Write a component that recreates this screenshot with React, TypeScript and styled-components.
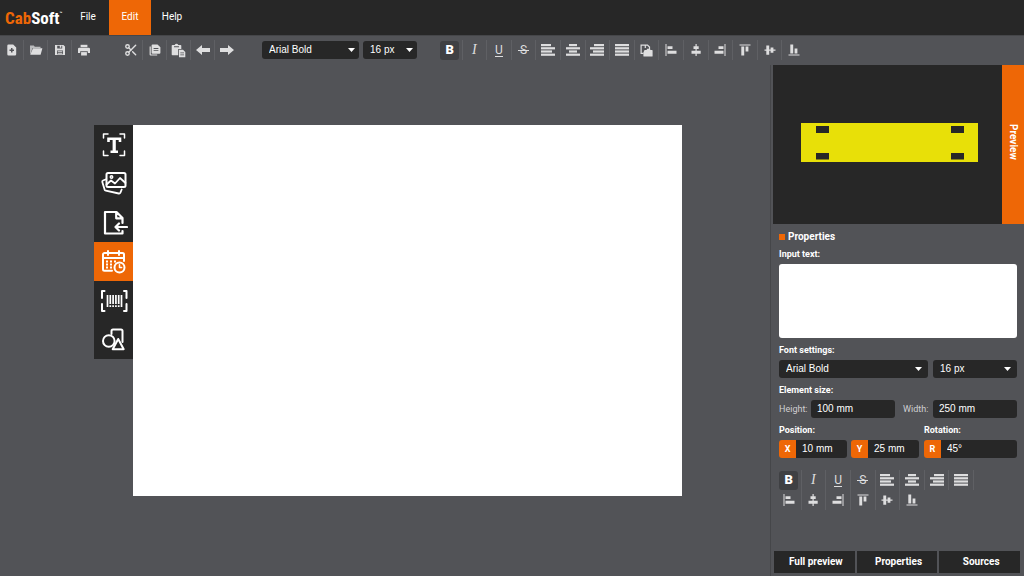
import React from "react";
import styled, { createGlobalStyle, css } from "styled-components";
import { Scissors } from "lucide-react";

const color = {
  bg: "#525357",
  dark: "#272727",
  line: "#5f6064",
  edge: "#454649",
  orange: "#ee6706",
  yellow: "#e8e008",
  icon: "#dededf",
  soft: "#d0d0d2",
};

const roboto = `Roboto, "Liberation Sans", sans-serif`;
const arial = `"Liberation Sans", Arial, sans-serif`;

const GlobalStyle = createGlobalStyle`
  *, *::before, *::after { box-sizing: border-box; }
  body { margin: 0; background: ${color.bg}; color: #fff; font-family: ${roboto}; font-size: 10px; }
  button, input, select, textarea { font: inherit; color: inherit; margin: 0; padding: 0; border: 0; background: none; border-radius: 0; }
  button { cursor: pointer; }
`;

const Page = styled.div`
  display: flex;
  flex-direction: column;
  min-height: 100vh;
`;

/* ---------- header ---------- */

const Header = styled.header`
  display: flex;
  height: 35px;
  background: ${color.dark};
`;

const Logo = styled.a`
  display: flex;
  align-items: center;
  width: 67px;
  padding-left: 5px;
  font-family: "Liberation Sans Narrow", "Roboto Condensed", Roboto, sans-serif;
  font-weight: 700;
  font-size: 17px;
  line-height: 20px;
  color: #fff;
  text-decoration: none;
`;

const LogoAccent = styled.span`
  color: ${color.orange};
`;

const LogoMark = styled.span`
  align-self: flex-start;
  padding-top: 9px;
  font-size: 5px;
  line-height: 8px;
`;

const Menu = styled.nav`
  display: flex;
`;

const MenuItem = styled.button<{ $active?: boolean }>`
  width: 42px;
  padding-bottom: 2px;
  background: ${(p) => (p.$active ? color.orange : "none")};
`;

/* ---------- tool bars ---------- */

const Toolbar = styled.div`
  display: flex;
  align-items: center;
  height: 30px;
  box-shadow: inset 0 1px ${color.edge};
`;

const IconGroup = styled.div<{ $columns: number; $width: number; $gap?: number }>`
  display: grid;
  grid-template-columns: repeat(${(p) => p.$columns}, 1fr);
  flex: none;
  width: ${(p) => p.$width}px;
  margin-right: ${(p) => p.$gap ?? 0}px;
`;

const IconCell = styled.div`
  display: flex;
  justify-content: center;
  align-items: center;
  height: 20px;
  border-right: 1px solid ${color.line};
  &:last-child {
    border-right-color: transparent;
  }
`;

const IconButton = styled.button<{ $on?: boolean }>`
  display: flex;
  justify-content: center;
  align-items: center;
  width: 19px;
  height: 19px;
  border-radius: 3px;
  color: ${color.icon};
  background: ${(p) => (p.$on ? "#3f4043" : "none")};
  svg {
    display: block;
    flex: none;
  }
`;

const Letter = styled.span<{ $kind: "b" | "i" | "u" | "s" }>`
  font-size: 12px;
  line-height: 14px;
  ${(p) => p.$kind === "b" && css`font-weight: 900; font-size: 13px; color: #fff;`}
  ${(p) => p.$kind === "i" && css`font-family: "Liberation Serif", serif; font-style: italic; font-size: 14px;`}
  ${(p) => p.$kind === "u" && css`line-height: 12px; border-bottom: 1px solid;`}
  ${(p) =>
    p.$kind === "s" &&
    css`
      padding: 0 2px;
      background: linear-gradient(currentColor, currentColor) center / 100% 1px no-repeat;
    `}
`;

const SelectGroup = styled.div`
  display: flex;
  flex: none;
  gap: 4px;
  margin-right: 21px;
`;

const SelectBox = styled.div<{ $width?: number; $inset: number }>`
  display: grid;
  align-items: center;
  ${(p) => p.$width && css`width: ${p.$width}px;`}
  height: 18px;
  border-radius: 3px;
  background: ${color.dark};
  > * {
    grid-area: 1 / 1;
  }
  select {
    appearance: none;
    width: 100%;
    height: 18px;
    padding: 0 16px 1px 7px;
    font-family: ${arial};
    font-size: 10px;
  }
  svg {
    justify-self: end;
    margin-right: ${(p) => p.$inset}px;
    pointer-events: none;
  }
`;

/* ---------- workspace ---------- */

const Main = styled.main`
  display: flex;
  flex: 1;
`;

const Workspace = styled.section`
  display: flex;
  align-items: stretch;
  flex: 1;
  min-width: 0;
  padding: 60px 88px 80px 94px;
`;

const Tools = styled.nav`
  display: flex;
  flex-direction: column;
  align-self: flex-start;
  flex: none;
  background: ${color.dark};
`;

const ToolButton = styled.button<{ $active?: boolean }>`
  display: flex;
  justify-content: center;
  align-items: center;
  width: 39px;
  height: 39px;
  background: ${(p) => (p.$active ? color.orange : "none")};
`;

const Canvas = styled.div`
  flex: 1;
  background: #fff;
`;

/* ---------- side panel ---------- */

const Side = styled.aside`
  display: flex;
  flex-direction: column;
  flex: none;
  width: 254px;
  padding-left: 2px;
  border-left: 1px solid ${color.edge};
`;

const Preview = styled.div`
  display: flex;
  height: 159px;
  background: ${color.dark};
`;

const PreviewStage = styled.div`
  display: flex;
  justify-content: center;
  align-items: center;
  flex: 1;
  padding: 0 0 4px 4px;
`;

const PreviewTab = styled.button`
  width: 22px;
  padding-bottom: 6px;
  background: ${color.orange};
  writing-mode: vertical-rl;
  font-weight: 700;
`;

const Form = styled.form`
  display: flex;
  flex-direction: column;
  gap: 7px;
  padding: 7px 7px 12px 6px;
`;

const Title = styled.h2`
  display: flex;
  align-items: center;
  gap: 3px;
  margin: 0;
  font-size: 10px;
  line-height: 11px;
  font-weight: 700;
  &::before {
    content: "";
    width: 6px;
    height: 6px;
    background: ${color.orange};
  }
`;

const Group = styled.div`
  display: flex;
  flex-direction: column;
  gap: 4px;
`;

const GroupLabel = styled.label`
  font-size: 9px;
  line-height: 11px;
  font-weight: 700;
`;

const TextArea = styled.textarea`
  display: block;
  width: 100%;
  height: 74px;
  padding: 4px 6px;
  border-radius: 3px;
  background: #fff;
  color: ${color.dark};
  resize: none;
`;

const FontRow = styled.div`
  display: grid;
  grid-template-columns: 1fr 84px;
  gap: 5px;
`;

const SizeRow = styled.div`
  display: grid;
  grid-template-columns: 32px 1fr 38px 1fr;
  align-items: center;
`;

const SizeLabel = styled.label<{ $indent?: boolean }>`
  padding-left: ${(p) => (p.$indent ? 8 : 0)}px;
  font-size: 9px;
  line-height: 11px;
  color: ${color.soft};
`;

const PlacementRow = styled.div`
  display: grid;
  grid-template-columns: 140px 1fr;
  gap: 5px;
`;

const PairRow = styled.div`
  display: grid;
  grid-template-columns: 1fr 1fr;
  gap: 4px;
`;

const Field = styled.input`
  width: 100%;
  min-width: 0;
  height: 18px;
  padding: 0 6px 1px;
  border-radius: 3px;
  background: ${color.dark};
  font-family: ${arial};
`;

const TaggedField = styled.div`
  display: flex;
  height: 18px;
  border-radius: 3px;
  overflow: hidden;
  ${Field} {
    border-radius: 0;
  }
`;

const Tag = styled.label`
  flex: none;
  width: 17px;
  background: ${color.orange};
  font-size: 9px;
  line-height: 18px;
  font-weight: 700;
  text-align: center;
`;

const SideTools = styled.div`
  padding: 0 4px;
`;

const SideFooter = styled.footer`
  display: grid;
  grid-template-columns: repeat(3, 1fr);
  gap: 2px;
  margin-top: auto;
  padding: 0 4px 3px 1px;
`;

const FooterButton = styled.button`
  height: 22px;
  padding: 0 0 1px 3px;
  background: ${color.dark};
  font-weight: 700;
`;

/* ---------- drawings ---------- */

const Svg = ({ w, h, children }: { w: number; h: number; children: React.ReactNode }) => (
  <svg width={w} height={h} viewBox={`0 0 ${w} ${h}`} fill="currentColor" aria-hidden="true">
    {children}
  </svg>
);

const Arrow = () => (
  <svg width="7" height="4" viewBox="0 0 7 4" fill="#fff" aria-hidden="true">
    <path d="M0 0h7L3.500 4z" />
  </svg>
);

const Bars = ({ rows }: { rows: [number, number][] }) => (
  <Svg w={14} h={12}>
    {rows.map(([x, w], i) => (
      <rect key={i} x={x} y={i * 3.2} width={w} height={2.2} />
    ))}
  </Svg>
);

const fileIcons: [string, React.ReactNode][] = [
  ["New", <Svg w={10} h={12}><path fillRule="evenodd" d="M1.500.5h4.700L9.200 3.500V10.200a1.200 1.200 0 0 1-1.200 1.200H1.500A1.200 1.200 0 0 1 .3 10.200V1.700A1.200 1.200 0 0 1 1.500.5zM4 4v1.500H2.500v1.400H4v1.600h1.500V6.900H7V5.500H5.500V4z" /></Svg>],
  ["Open", <Svg w={14} h={12}><path d="M1 1.500h3.800l1 1.200h5.700v1.200H3.600L1.600 9.500 1 10z" opacity=".75" /><path d="M4 4.200h9.400l-1.800 6.600H1.200z" /></Svg>],
  ["Save", <Svg w={12} h={12}><path fillRule="evenodd" d="M1 1h8.400L11 2.600V11H1zM3.200 1.800v2.800h5V1.800H7.300v2H5.800v-2zM3 6.500v3.800h6V6.500z" /><path d="M3.700 7.300h4.600v.9H3.700zM3.700 9h4.600v.8H3.700z" /></Svg>],
  ["Print", <Svg w={14} h={12}><path d="M3.600.8h6.800v2.400H3.600z" /><path fillRule="evenodd" d="M2.200 3.800h9.600A1.200 1.200 0 0 1 13 5v4h-2.200V7.300H3.200V9H1V5a1.200 1.200 0 0 1 1.200-1.200z" /><path d="M4.100 8.100h5.800v3.400H4.100z" /></Svg>],
];

const editIcons: [string, React.ReactNode][] = [
  ["Cut", <Scissors size={14} strokeWidth={2.4} />],
  ["Copy", <Svg w={12} h={12}><path d="M.6 2.600h1.200v7.800h6.400v1.200H1.600a1 1 0 0 1-1-1z" /><path fillRule="evenodd" d="M3.600.4h4.900l2.900 2.800v5.600a1 1 0 0 1-1 1H3.600a1 1 0 0 1-1-1V1.400a1 1 0 0 1 1-1zM4.600 4v.9h4.800V4zM4.600 6.200v.9h4.800v-.9z" /></Svg>],
  ["Paste", <Svg w={15} h={15}><path fillRule="evenodd" d="M1.500 2h2.200a2 2 0 0 1 3.600 0h2.200a.8.8 0 0 1 .8.8v3.100H7.200v6.300H1.500a.8.8 0 0 1-.8-.8V2.800a.8.8 0 0 1 .8-.8zM3 3.200v1h5v-1z" /><path fillRule="evenodd" d="M8 6.800h4l2.300 2.200v5.200H8zM9.300 9.500v.8H13v-.8zM9.300 11.500v.8H13v-.8z" /></Svg>],
  ["Undo", <Svg w={14} h={10}><path d="M0 5 6 0v3h8v4H6v3z" /></Svg>],
  ["Redo", <Svg w={14} h={10}><path d="M14 5 8 0v3H0v4h8v3z" /></Svg>],
];

const textIcons: [string, React.ReactNode][] = [
  ["Bold", <Letter $kind="b">B</Letter>],
  ["Italic", <Letter $kind="i">I</Letter>],
  ["Underline", <Letter $kind="u">U</Letter>],
  ["Strikethrough", <Letter $kind="s">S</Letter>],
  ["Align left", <Bars rows={[[0, 10], [0, 14], [0, 11], [0, 14]]} />],
  ["Align center", <Bars rows={[[3, 8], [0, 14], [3, 8], [0, 14]]} />],
  ["Align right", <Bars rows={[[4, 10], [0, 14], [3, 11], [0, 14]]} />],
  ["Justify", <Bars rows={[[0, 14], [0, 14], [0, 14], [0, 14]]} />],
];

const arrangeIcon: [string, React.ReactNode] = [
  "Arrange",
  <Svg w={13} h={13}><path fill="none" stroke="currentColor" strokeWidth="1.200" d="M3.500 9.400H1.100V1.100h4.200v3M5.300 1.100h2.200l2 2v2.400" /><path d="M4.500 6h2l.8-1.200h2.500L10.500 6H12a.6.6 0 0 1 .6.6V12a.6.6 0 0 1-.6.600H4a.6.6 0 0 1-.6-.6V8.500z" /></Svg>,
];

const objectIcons: [string, React.ReactNode][] = [
  ["Align objects left", <Svg w={12} h={12}><path d="M.5 0h1v12h-1zM2.500 2.300h5v2.800h-5zM2.500 6.800h9v2.900h-9z" /></Svg>],
  ["Align objects center", <Svg w={12} h={12}><path d="M5.500 0h1.200v12H5.500zM3.500 2.300h5.200v2.800H3.500zM1.500 6.800h9.200v2.900H1.500z" /></Svg>],
  ["Align objects right", <Svg w={12} h={12}><path d="M10.500 0h1v12h-1zM4.500 2.300h5v2.800h-5zM.5 6.800h9v2.900h-9z" /></Svg>],
  ["Align objects top", <Svg w={12} h={12}><path d="M.5.500h11v1H.5zM2.300 2.500h2.900v9H2.300zM6.600 2.500h2.800v5H6.600z" /></Svg>],
  ["Align objects middle", <Svg w={12} h={12}><path d="M.5 5.500h11v1.200H.5zM2.300 1.500h2.900v9.200H2.300zM6.600 3.500h2.800v5.200H6.600z" /></Svg>],
  ["Align objects bottom", <Svg w={12} h={12}><path d="M.5 10.500h11v1H.5zM2.300.5h2.900v9H2.300zM6.600 4.500h2.800v5H6.600z" /></Svg>],
];

const ToolSvg = ({ children }: { children: React.ReactNode }) => (
  <svg width="28" height="26" viewBox="0 1 28 26" fill="none" stroke="#fff" strokeWidth="2" strokeLinecap="round" strokeLinejoin="round" aria-hidden="true">
    {children}
  </svg>
);

const tools: [string, React.ReactNode][] = [
  ["Text", <ToolSvg><path strokeWidth="1.500" d="M3.500 7V3H8M20 3h4.500v4M24.500 20v4.500H20M8 24.500H3.500V20" /><path strokeWidth="2.600" strokeLinecap="butt" strokeLinejoin="miter" d="M8.500 11V7.800h11.500V11M10.500 20.700h7.500" /><path strokeWidth="3.200" strokeLinecap="butt" d="M14.200 7.500v13" /></ToolSvg>],
  ["Image", <ToolSvg><path d="M8 3h16a1.500 1.500 0 0 1 1.500 1.500v11A1.500 1.500 0 0 1 24 17H8a1.500 1.500 0 0 1-1.500-1.500v-11A1.500 1.500 0 0 1 8 3z" /><path strokeWidth="1.800" d="m6.500 14.500 4.500-4 4 3 5-5.500 5.500 5" /><circle cx="11.500" cy="7" r="1.200" strokeWidth="1.500" /><path strokeWidth="1.800" d="M5.500 9.500 3 10.500a1.200 1.200 0 0 0-.7 1.500l2.300 7.600c.2.600.6.900 1.200 1l13 2.900c.8.100 1.300-.2 1.600-.8l1.300-3.200" /></ToolSvg>],
  ["Import", <ToolSvg><path strokeWidth="2.200" d="M22.500 14V9l-6-6H5v21.500h17.500V22M16.200 3.300v6h6.300M27 18H15.500M19 14.500 15.500 18l3.500 3.500" /></ToolSvg>],
  ["Date", <ToolSvg><path d="M12 22.800H4.500A1.500 1.500 0 0 1 3 21.300V6.500A1.500 1.500 0 0 1 4.500 5h18A1.500 1.500 0 0 1 24 6.500V13M3 10h21M8 3v4M19 3v4" /><circle cx="19.500" cy="19.500" r="5" /><path strokeWidth="1.500" d="M19.500 16.700v2.800h2.200" /><g strokeWidth="2" strokeLinecap="butt"><path d="M6 13.500h2M10 13.500h2M14 13.500h2M6 16.500h2M10 16.500h2M6 19.500h2M10 19.500h2" /></g></ToolSvg>],
  ["Barcode", <ToolSvg><path d="M4.500 4H2v5.500M2 18.500V24h2.500M24 4h2.500v5.500M26.500 18.500V24H24M2 9.500v1.500M2 17v1.500M26.500 9.500V11M26.500 17v1.500" /><path strokeWidth="1.700" strokeLinecap="butt" d="M7.500 8v12M10.300 8v9M13.100 8v9M15.900 8v9M18.700 8v9M21.500 8v12M10.300 18.300V20M13.100 18.300V20M15.900 18.300V20M18.700 18.300V20" /></ToolSvg>],
  ["Shapes", <ToolSvg><path d="M11.500 8V5A1.500 1.500 0 0 1 13 3.500h8A1.500 1.500 0 0 1 22.500 5v11" /><circle cx="8.800" cy="15" r="5.800" /><path d="m18.200 13 5.500 10.200h-11z" /></ToolSvg>],
];

const Icons = ({ items, on }: { items: [string, React.ReactNode][]; on?: string }) => (
  <>
    {items.map(([name, icon]) => (
      <IconCell key={name}>
        <IconButton type="button" aria-label={name} $on={name === on}>
          {icon}
        </IconButton>
      </IconCell>
    ))}
  </>
);

const Select = ({ label, id, value, width, inset }: { label?: string; id?: string; value: string; width?: number; inset: number }) => (
  <SelectBox $width={width} $inset={inset}>
    <select aria-label={label} id={id} defaultValue={value}>
      <option>{value}</option>
    </select>
    <Arrow />
  </SelectBox>
);

export default function App() {
  return (
    <Page>
      <GlobalStyle />
      <Header>
        <Logo href="#">
          <LogoAccent>Cab</LogoAccent>Soft<LogoMark>™</LogoMark>
        </Logo>
        <Menu>
          <MenuItem>File</MenuItem>
          <MenuItem $active>Edit</MenuItem>
          <MenuItem>Help</MenuItem>
        </Menu>
      </Header>

      <Toolbar>
        <IconGroup $columns={4} $width={96} $gap={23}>
          <Icons items={fileIcons} />
        </IconGroup>
        <IconGroup $columns={5} $width={120} $gap={23}>
          <Icons items={editIcons} />
        </IconGroup>
        <SelectGroup>
          <Select label="Font" value="Arial Bold" width={97} inset={4} />
          <Select label="Font size" value="16 px" width={54} inset={4} />
        </SelectGroup>
        <IconGroup $columns={15} $width={369}>
          <Icons items={[...textIcons, arrangeIcon, ...objectIcons]} on="Bold" />
        </IconGroup>
      </Toolbar>

      <Main>
        <Workspace>
          <Tools>
            {tools.map(([name, icon]) => (
              <ToolButton key={name} aria-label={name} $active={name === "Date"}>
                {icon}
              </ToolButton>
            ))}
          </Tools>
          <Canvas />
        </Workspace>

        <Side>
          <Preview>
            <PreviewStage>
              <svg width="177" height="39" viewBox="0 0 177 39" role="img" aria-label="Label plate">
                <rect width="177" height="39" fill={color.yellow} />
                <g fill={color.dark}>
                  <rect x="15" y="3" width="13" height="7" />
                  <rect x="150" y="3" width="13" height="7" />
                  <rect x="15" y="30" width="13" height="6.500" />
                  <rect x="150" y="30" width="13" height="6.500" />
                </g>
              </svg>
            </PreviewStage>
            <PreviewTab>Preview</PreviewTab>
          </Preview>

          <Form>
            <Title>Properties</Title>
            <Group>
              <GroupLabel htmlFor="text">Input text:</GroupLabel>
              <TextArea id="text" />
            </Group>
            <Group>
              <GroupLabel htmlFor="font">Font settings:</GroupLabel>
              <FontRow>
                <Select id="font" value="Arial Bold" inset={6} />
                <Select label="Font size" value="16 px" inset={6} />
              </FontRow>
            </Group>
            <Group>
              <GroupLabel htmlFor="height">Element size:</GroupLabel>
              <SizeRow>
                <SizeLabel htmlFor="height">Height:</SizeLabel>
                <Field id="height" defaultValue="100 mm" />
                <SizeLabel htmlFor="width" $indent>Width:</SizeLabel>
                <Field id="width" defaultValue="250 mm" />
              </SizeRow>
            </Group>
            <PlacementRow>
              <Group>
                <GroupLabel htmlFor="x">Position:</GroupLabel>
                <PairRow>
                  <TaggedField>
                    <Tag htmlFor="x">X</Tag>
                    <Field id="x" defaultValue="10 mm" />
                  </TaggedField>
                  <TaggedField>
                    <Tag htmlFor="y">Y</Tag>
                    <Field id="y" defaultValue="25 mm" />
                  </TaggedField>
                </PairRow>
              </Group>
              <Group>
                <GroupLabel htmlFor="r">Rotation:</GroupLabel>
                <TaggedField>
                  <Tag htmlFor="r">R</Tag>
                  <Field id="r" defaultValue="45°" />
                </TaggedField>
              </Group>
            </PlacementRow>
          </Form>

          <SideTools>
            <IconGroup $columns={8} $width={197}>
              <Icons items={[...textIcons, ...objectIcons]} on="Bold" />
            </IconGroup>
          </SideTools>

          <SideFooter>
            <FooterButton>Full preview</FooterButton>
            <FooterButton>Properties</FooterButton>
            <FooterButton>Sources</FooterButton>
          </SideFooter>
        </Side>
      </Main>
    </Page>
  );
}
